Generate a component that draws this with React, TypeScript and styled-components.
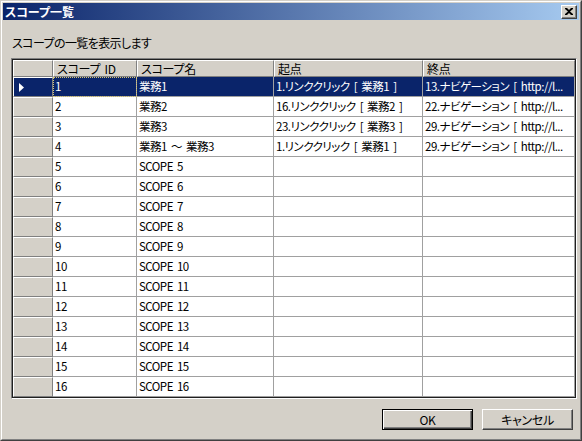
import React from 'react';
import styled, { createGlobalStyle } from 'styled-components';

const FACE = '#d4d0c8';
const NAVY = '#0a246a';

const GlobalStyle = createGlobalStyle`
  html, body {
    margin: 0;
    padding: 0;
    background: ${FACE};
  }
  body {
    font-family: "Noto Sans CJK JP", sans-serif;
    font-size: 12px;
    font-feature-settings: "palt";
  }
`;

interface IScope {
  id: string;
  name: string;
  start: string;
  end: string;
}

const scopes: IScope[] = [
  { id: '1', name: '業務1', start: '1.リンククリック [ 業務1 ]', end: '13.ナビゲーション [ http://l...' },
  { id: '2', name: '業務2', start: '16.リンククリック [ 業務2 ]', end: '22.ナビゲーション [ http://l...' },
  { id: '3', name: '業務3', start: '23.リンククリック [ 業務3 ]', end: '29.ナビゲーション [ http://l...' },
  { id: '4', name: '業務1 ～ 業務3', start: '1.リンククリック [ 業務1 ]', end: '29.ナビゲーション [ http://l...' },
  ...Array.from({ length: 12 }, (_, i) => ({
    id: String(i + 5),
    name: `SCOPE ${i + 5}`,
    start: '',
    end: '',
  })),
];

const COLUMNS = '40px 84px 137px 149px 1fr';

const WindowStyled = styled.div`
  box-sizing: border-box;
  width: 582px;
  height: 441px;
  display: flex;
  background: ${FACE};
  border: 1px solid;
  border-color: ${FACE} #404040 #404040 ${FACE};
`;

const WindowInnerStyled = styled.div`
  flex: 1;
  display: flex;
  flex-direction: column;
  padding: 1px;
  border: 1px solid;
  border-color: #fff #808080 #808080 #fff;
`;

const TitleBarStyled = styled.div`
  height: 17px;
  display: flex;
  align-items: center;
  justify-content: space-between;
  padding: 0 2px 0 2px;
  background: linear-gradient(to right, ${NAVY}, #a6caf0);
`;

const TitleStyled = styled.div`
  color: #fff;
  font-weight: 700;
  font-size: 12px;
  line-height: 17px;
`;

const CloseButtonStyled = styled.div`
  box-sizing: border-box;
  width: 16px;
  height: 14px;
  display: flex;
  align-items: center;
  justify-content: center;
  background: ${FACE};
  border: 1px solid;
  border-color: #fff #404040 #404040 #fff;
  box-shadow: inset -1px -1px #808080;
`;

const ContentStyled = styled.div`
  flex: 1;
  display: flex;
  flex-direction: column;
  padding: 0 2px 0 8px;
`;

const LabelStyled = styled.div`
  margin: 16px 0 0 1px;
  height: 14px;
  line-height: 14px;
  letter-spacing: -0.6px;
  color: #000;
`;

const GridOuterStyled = styled.div`
  margin-top: 8px;
  box-sizing: border-box;
  height: 341px;
  border: 1px solid;
  border-color: #808080 #fff #fff #808080;
`;

const GridInnerStyled = styled.div`
  height: 100%;
  box-sizing: border-box;
  border: 1px solid #202020;
  background: #fff;
  overflow: hidden;
`;

const RowStyled = styled.div<{ $header?: boolean }>`
  display: grid;
  grid-template-columns: ${COLUMNS};
  height: ${({ $header }) => ($header ? 17 : 20)}px;
`;

const HeaderCellStyled = styled.div`
  box-sizing: border-box;
  background: ${FACE};
  padding-left: 3px;
  line-height: 15px;
  letter-spacing: -0.3px;
  word-spacing: 2px;
  white-space: nowrap;
  overflow: hidden;
  border-left: 1px solid #fff;
  border-top: 1px solid #fff;
  border-right: 1px solid #808080;
  border-bottom: 1px solid #808080;
`;

const RowHeaderStyled = styled.div<{ $selected?: boolean }>`
  box-sizing: border-box;
  display: flex;
  align-items: center;
  padding-left: 5px;
  background: ${({ $selected }) => ($selected ? NAVY : FACE)};
  border-top: 1px solid #fff;
  border-left: 1px solid #fff;
  border-right: 1px solid #808080;
  border-bottom: 1px solid #808080;
`;

const CellStyled = styled.div<{ $selected?: boolean; $focused?: boolean }>`
  box-sizing: border-box;
  padding-left: 2px;
  font-size: 11.5px;
  line-height: 19px;
  letter-spacing: -0.5px;
  word-spacing: 2px;
  white-space: nowrap;
  overflow: hidden;
  color: ${({ $selected }) => ($selected ? '#fff' : '#000')};
  background: ${({ $selected }) => ($selected ? NAVY : '#fff')};
  border-right: 1px solid #a0a0a0;
  border-bottom: 1px solid #a0a0a0;
  outline: ${({ $focused }) => ($focused ? '1px dotted #d8c878' : 'none')};
  outline-offset: -1px;
`;

const ButtonBarStyled = styled.div`
  display: flex;
  justify-content: flex-end;
  gap: 9px;
  margin-top: 10px;
  padding-right: 4px;
`;

const ButtonStyled = styled.button<{ $default?: boolean }>`
  box-sizing: border-box;
  width: 91px;
  height: 21px;
  padding: 0;
  background: ${FACE};
  color: #000;
  font-family: "Noto Sans CJK JP", sans-serif;
  font-size: 12px;
  font-feature-settings: "palt";
  letter-spacing: -0.3px;
  border: 1px solid;
  border-color: ${({ $default }) => ($default ? '#000' : '#fff #404040 #404040 #fff')};
  box-shadow: ${({ $default }) =>
    $default
      ? 'inset 1px 1px #fff, inset -1px -1px #404040, inset -2px -2px #808080'
      : 'inset -1px -1px #808080'};
`;

const CloseIcon = () => (
  <svg width="8" height="7" viewBox="0 0 8 7">
    <path d="M0 0h2l2 2 2-2h2v1L5 3.5 8 6v1H6L4 5 2 7H0V6l3-2.5L0 1z" fill="#000" />
  </svg>
);

const ArrowIcon = () => (
  <svg width="5" height="9" viewBox="0 0 5 9">
    <polygon points="0,0 5,4.5 0,9" fill="#fff" />
  </svg>
);

const App = () => {
  const selectedIndex = 0;

  return (
    <>
      <GlobalStyle />
      <WindowStyled>
        <WindowInnerStyled>
          <TitleBarStyled>
            <TitleStyled>スコープ一覧</TitleStyled>
            <CloseButtonStyled>
              <CloseIcon />
            </CloseButtonStyled>
          </TitleBarStyled>
          <ContentStyled>
            <LabelStyled>スコープの一覧を表示します</LabelStyled>
            <GridOuterStyled>
              <GridInnerStyled>
                <RowStyled $header>
                  <HeaderCellStyled />
                  <HeaderCellStyled>スコープ ID</HeaderCellStyled>
                  <HeaderCellStyled>スコープ名</HeaderCellStyled>
                  <HeaderCellStyled>起点</HeaderCellStyled>
                  <HeaderCellStyled>終点</HeaderCellStyled>
                </RowStyled>
                {scopes.map((scope, index) => {
                  const selected = index === selectedIndex;
                  return (
                    <RowStyled key={scope.id}>
                      <RowHeaderStyled $selected={selected}>
                        {selected && <ArrowIcon />}
                      </RowHeaderStyled>
                      <CellStyled $selected={selected} $focused={selected}>{scope.id}</CellStyled>
                      <CellStyled $selected={selected}>{scope.name}</CellStyled>
                      <CellStyled $selected={selected}>{scope.start}</CellStyled>
                      <CellStyled $selected={selected}>{scope.end}</CellStyled>
                    </RowStyled>
                  );
                })}
              </GridInnerStyled>
            </GridOuterStyled>
            <ButtonBarStyled>
              <ButtonStyled $default>OK</ButtonStyled>
              <ButtonStyled>キャンセル</ButtonStyled>
            </ButtonBarStyled>
          </ContentStyled>
        </WindowInnerStyled>
      </WindowStyled>
    </>
  );
};

export default App;
